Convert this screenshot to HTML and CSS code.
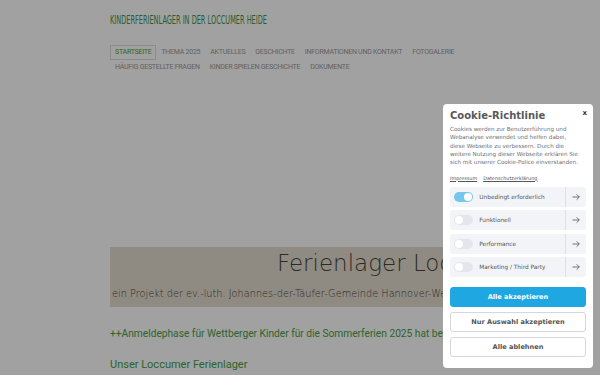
FILE: index.html
```html
<!DOCTYPE html>
<html lang="de">
<head>
<meta charset="utf-8">
<title>Kinderferienlager in der Loccumer Heide</title>
<link rel="stylesheet" href="styles.css">
</head>
<body>
<div class="page">
  <header class="site-head">
    <div class="site-title"><span class="site-title-text">Kinderferienlager in der Loccumer Heide</span></div>
    <nav class="menu">
      <a class="menu-item active" href="#">Startseite</a>
      <a class="menu-item" href="#">Thema 2025</a>
      <a class="menu-item" href="#">Aktuelles</a>
      <a class="menu-item" href="#">Geschichte</a>
      <a class="menu-item" href="#">Informationen und Kontakt</a>
      <a class="menu-item" href="#">Fotogalerie</a>
      <a class="menu-item" href="#">Häufig gestellte Fragen</a>
      <a class="menu-item" href="#">Kinder spielen Geschichte</a>
      <a class="menu-item" href="#">Dokumente</a>
    </nav>
  </header>
  <div class="slider"></div>
  <div class="banner">
    <div class="banner-title">Ferienlager Loccum</div>
    <div class="banner-sub">ein Projekt der ev.-luth. Johannes-der-Täufer-Gemeinde Hannover-Wettbergen</div>
  </div>
  <p class="news">++Anmeldephase für Wettberger Kinder für die Sommerferien 2025 hat begonnen++</p>
  <h2 class="section-title">Unser Loccumer Ferienlager</h2>
</div>

<div class="overlay"></div>

<div class="cookie">
  <button class="cookie-close" type="button">x</button>
  <h3 class="cookie-title">Cookie-Richtlinie</h3>
  <p class="cookie-text">Cookies werden zur Benutzerführung und<br>Webanalyse verwendet und helfen dabei,<br>diese Webseite zu verbessern. Durch die<br>weitere Nutzung dieser Webseite erklären Sie<br>sich mit unserer Cookie-Police einverstanden.</p>
  <div class="cookie-links"><a href="#">Impressum</a><a href="#">Datenschutzerklärung</a></div>
  <div class="cookie-rows">
    <div class="cookie-row">
      <div class="row-main"><span class="toggle on"></span><span class="row-label">Unbedingt erforderlich</span></div>
      <div class="row-arrow"><svg width="8" height="8" viewBox="0 0 8 8"><path d="M0.5 4H7.3M4.6 1.3L7.3 4L4.6 6.7" fill="none" stroke="#555" stroke-width="0.8"/></svg></div>
    </div>
    <div class="cookie-row">
      <div class="row-main"><span class="toggle"></span><span class="row-label">Funktionell</span></div>
      <div class="row-arrow"><svg width="8" height="8" viewBox="0 0 8 8"><path d="M0.5 4H7.3M4.6 1.3L7.3 4L4.6 6.7" fill="none" stroke="#555" stroke-width="0.8"/></svg></div>
    </div>
    <div class="cookie-row">
      <div class="row-main"><span class="toggle"></span><span class="row-label">Performance</span></div>
      <div class="row-arrow"><svg width="8" height="8" viewBox="0 0 8 8"><path d="M0.5 4H7.3M4.6 1.3L7.3 4L4.6 6.7" fill="none" stroke="#555" stroke-width="0.8"/></svg></div>
    </div>
    <div class="cookie-row">
      <div class="row-main"><span class="toggle"></span><span class="row-label">Marketing / Third Party</span></div>
      <div class="row-arrow"><svg width="8" height="8" viewBox="0 0 8 8"><path d="M0.5 4H7.3M4.6 1.3L7.3 4L4.6 6.7" fill="none" stroke="#555" stroke-width="0.8"/></svg></div>
    </div>
  </div>
  <div class="cookie-buttons">
    <button class="btn btn-primary" type="button">Alle akzeptieren</button>
    <button class="btn" type="button">Nur Auswahl akzeptieren</button>
    <button class="btn" type="button">Alle ablehnen</button>
  </div>
</div>
</body>
</html>
```
FILE: styles.css
```css
* { box-sizing: border-box; }
html, body { margin: 0; padding: 0; }
body {
  background: #ffffff;
  font-family: Roboto, "Liberation Sans", sans-serif;
  overflow: hidden;
}
.page {
  width: 380px;
  margin: 0 auto;
}
.site-title {
  margin-top: 13px;
  height: 12px;
  line-height: 12px;
  white-space: nowrap;
}
.site-title-text {
  display: inline-block;
  font-family: "DejaVu Sans Condensed", "DejaVu Sans", sans-serif;
  font-stretch: condensed;
  font-size: 12px;
  text-transform: uppercase;
  color: #3f9650;
  transform: scaleX(0.61);
  transform-origin: 0 0;
}
.menu {
  margin-top: 20px;
  display: flex;
  flex-wrap: wrap;
}
.menu-item {
  display: block;
  height: 15px;
  line-height: 13px;
  padding: 0 4px;
  border: 1px solid transparent;
  font-family: Roboto, sans-serif;
  font-size: 7px;
  letter-spacing: -0.25px;
  text-transform: uppercase;
  color: #9a9a9a;
  text-decoration: none;
  white-space: nowrap;
}
.menu-item.active {
  border-color: #dddddd;
  color: #46a046;
}
.slider {
  height: 172px;
}
.banner {
  height: 60px;
  background: #e2ddd0;
  padding: 2px 0 0 2px;
  white-space: nowrap;
  color: #4a4238;
  font-family: "DejaVu Sans", sans-serif;
  font-stretch: condensed;
  font-weight: 200;
}
.banner-title {
  padding-left: 165px;
  font-size: 23px;
  line-height: 28px;
}
.banner-sub {
  margin-top: 11px;
  font-size: 9.75px;
  line-height: 12px;
}
.news {
  margin: 19px 0 0;
  font-size: 10.2px;
  line-height: 15px;
  color: #46a046;
  white-space: nowrap;
}
.section-title {
  margin: 16px 0 0;
  font-size: 11px;
  font-weight: 400;
  line-height: 15px;
  color: #46a046;
}
.overlay {
  position: fixed;
  inset: 0;
  background: rgba(0, 0, 0, 0.37);
}
.cookie {
  position: fixed;
  left: 443px;
  top: 104px;
  width: 150px;
  height: 264px;
  padding: 5px 7px 11px;
  background: #ffffff;
  border-radius: 4px;
  font-family: "DejaVu Sans", sans-serif;
  color: #555;
}
.cookie-close {
  position: absolute;
  top: 5px;
  right: 6px;
  padding: 0;
  border: 0;
  background: none;
  font-family: "DejaVu Sans", sans-serif;
  font-size: 7px;
  font-weight: 700;
  line-height: 8px;
  color: #333;
}
.cookie-title {
  margin: 0;
  font-size: 10px;
  line-height: 13px;
  font-weight: 700;
  color: #595959;
}
.cookie-text {
  margin: 3px 0 0;
  font-size: 5.6px;
  line-height: 8.35px;
  color: #6e6e6e;
  white-space: nowrap;
}
.cookie-links {
  margin-top: 6.8px;
  height: 8px;
  display: flex;
  gap: 6px;
  font-size: 4.9px;
  line-height: 8px;
}
.cookie-links a {
  color: #555;
  text-decoration: underline;
}
.cookie-rows {
  margin-top: 5.6px;
  display: flex;
  flex-direction: column;
  gap: 3.33px;
}
.cookie-row {
  height: 20px;
  display: flex;
  background: #f3f4f8;
  border-radius: 3px;
}
.row-main {
  flex: 1;
  display: flex;
  align-items: center;
  padding-left: 4.3px;
  gap: 6px;
}
.toggle {
  position: relative;
  width: 19px;
  height: 10px;
  border-radius: 5px;
  background: #e4e6ee;
  flex: none;
}
.toggle::after {
  content: "";
  position: absolute;
  top: 1px;
  left: 1px;
  width: 8px;
  height: 8px;
  border-radius: 50%;
  background: #fff;
}
.toggle.on { background: #74c7ea; }
.toggle.on::after { left: 10px; }
.row-label {
  font-size: 5.8px;
  color: #555;
  white-space: nowrap;
}
.row-arrow {
  width: 21px;
  border-left: 1px solid #dfe0e6;
  display: flex;
  align-items: center;
  justify-content: center;
}
.row-arrow svg { display: block; }
.cookie-buttons {
  margin-top: 10px;
  display: flex;
  flex-direction: column;
  gap: 5.5px;
}
.btn {
  height: 19.5px;
  padding: 0;
  border: 1px solid #d6d7de;
  border-radius: 3px;
  background: #fff;
  font-family: "DejaVu Sans", sans-serif;
  font-size: 6.6px;
  font-weight: 700;
  color: #555;
}
.btn-primary {
  background: #1ea7e1;
  border-color: #1ea7e1;
  color: #fff;
}
```
